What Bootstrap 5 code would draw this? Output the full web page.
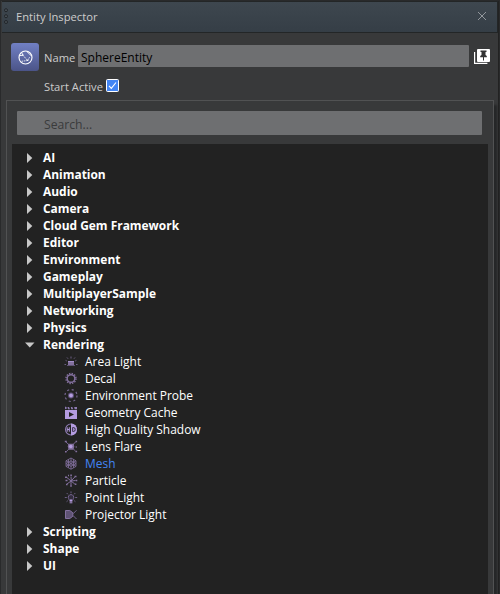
<!DOCTYPE html>
<html lang="en">
<head>
<meta charset="utf-8">
<meta name="viewport" content="width=device-width, initial-scale=1">
<title>Entity Inspector</title>
<link href="https://cdn.jsdelivr.net/npm/bootstrap@5.3.0/dist/css/bootstrap.min.css" rel="stylesheet">
<style>
  body { background: #38393a; color: #ccc; font: 11.2px/17px "Open Sans", sans-serif; height: 594px; }
  .inspector { height: 594px; border: 2px solid #292a2b; border-width: 1px 1px 0 1px; box-shadow: inset -1px 0 #222; }
  .title-bar { height: 32px; margin: 0 1px 0 1px; padding: 0 10px 2px 2px; background: linear-gradient(#3e474f, #353e46); border: 1px solid #232627; border-left: 0; color: #ccc; }
  .grip { width: 4px; margin-right: 8px; }
  .entity-head { height: 67px; padding: 10px 9px 0 10px; }
  .entity-icon { width: 28px; height: 28px; border-radius: 3px; background: linear-gradient(#7180c4, #4b5488); }
  .name-line { height: 22px; margin-top: 2px; }
  .name-label { width: 34px; margin-left: 5px; margin-top: 3px; }
  .name-input { height: 22px; background: #6e6f71; color: #000; border: 0; border-radius: 1px; padding: 2px 3px 0; font: 12px/20px "Open Sans", sans-serif; width: 391px; }
  .pin { margin-top: 5px; }
  .active-row { padding-left: 33px; margin-top: 7px; height: 16px; }
  .active-row svg { margin-left: 3px; margin-top: -2px; }
  .component-panel { margin: 0 5px; height: 494px; border: 1px solid #515253; border-bottom: 0; box-shadow: 3px 5px 2px #252627; padding: 10px 5px 0; }
  .search-input { height: 24px; margin: 0 6px 0 5px; width: 465px; background: #6e6f71; color: #3e3f40; border: 0; border-radius: 1px; padding: 2px 27px 0; font: 12.2px/22px "Open Sans", sans-serif; }
  .search-input::placeholder { color: #3a3b3c; opacity: 1; }
  .tree { margin-top: 9px; height: 450px; background: #222; padding-top: 5px; color: #fff; }
  .tree-row { height: 17px; line-height: 17px; font-size: 11.95px; white-space: nowrap; }
  .group-row { padding-left: 13px; font-weight: 700; }
  .group-row svg { width: 10px; height: 12px; margin-right: 8px; }
  .leaf-row { padding-left: 52px; }
  .leaf-row svg { width: 14px; height: 14px; margin-right: 7px; overflow: visible; }
  .leaf-row.selected { color: #4285f4; }
  svg { display: block; flex: none; }
</style>
<script src="https://cdn.jsdelivr.net/npm/bootstrap@5.3.0/dist/js/bootstrap.bundle.min.js"></script>
</head>
<body class="m-0 overflow-hidden">
<main class="inspector">
  <header class="title-bar d-flex align-items-center">
    <svg class="grip" width="4" height="16" viewBox="0 0 4 16" fill="#4b5359" stroke="#1f2326" stroke-width=".9"><circle cx="2" cy="2.2" r="1.5"/><circle cx="2" cy="8.2" r="1.5"/><circle cx="2" cy="14" r="1.5"/></svg>
    <span>Entity Inspector</span>
    <svg class="ms-auto" width="10" height="10" viewBox="0 0 10 10" fill="none" stroke="#92979c"><path d="M1 1l8 8M9 1L1 9"/></svg>
  </header>
  <section class="entity-head">
    <div class="d-flex">
      <div class="entity-icon d-flex align-items-center justify-content-center">
        <svg width="15" height="15" viewBox="0 0 15 15" fill="none" stroke="#fff"><circle cx="7.5" cy="7.5" r="6.5" stroke-width="1.1"/><path d="M1.3 5.6L5 5.3M5 5.3L3.7 2.7M8.8 1.5l4.4 4.2" stroke-width=".9"/><path d="M5 5.3l4.6 5.2M3.6 11.3l6-.8M11.6 7.2l-2 3.3" stroke-width=".8" stroke-dasharray="1.6 .7"/><path d="M4.5 5h1M9 10.3h1.4"/></svg>
      </div>
      <div class="d-flex align-items-center name-line">
        <label class="name-label" for="entityName">Name</label>
        <input class="name-input" id="entityName" value="SphereEntity">
      </div>
      <svg class="pin ms-auto" width="16" height="17" viewBox="0 0 16 17"><path d="M.6 4v11.4h12.8" fill="none" stroke="#fff" stroke-width="1.2"/><rect x="3" y="1" width="13" height="13" rx="1" fill="#fff"/><path d="M6.5 2.5h6v1.4h-1v3l1.3 1.2v1.2H10v3.2H9V9.3H6.2V8.1l1.3-1.2v-3h-1z" fill="#333"/></svg>
    </div>
    <div class="active-row d-flex align-items-center">
      <span>Start Active</span>
      <svg width="13" height="13" viewBox="0 0 13 13"><rect x=".5" y=".5" width="12" height="12" rx="1" fill="#4285f4" stroke="#fff"/><path d="M3 6.8l2.3 2.6L10 3.5" fill="none" stroke="#fff" stroke-width="1.1"/></svg>
    </div>
  </section>
  <section class="component-panel">
    <input class="search-input d-block" placeholder="Search..." aria-label="Search">
    <div class="tree" id="tree"></div>
  </section>
</main>
<script>
  const icons = {
    area: '<path d="M4 6h6v4H4z" fill="#84719f"/><path d="M4 6.5h6" stroke="#a48fcb"/><path d="M3 10.5h8" stroke="#5f5374"/><path d="M7 1.5v2M3 2.5l1 1.2M11 2.5l-1 1.2M.5 9.5h1.6M12 9.5h1.6M1.6 5.4l1.2.6M12.4 5.4l-1.2.6" stroke="#6c5f84"/>',
    decal: '<circle cx="7" cy="6.5" r="3.8" fill="none" stroke="#84719f" stroke-width="1.4"/><circle cx="7" cy="6.5" r="5" fill="none" stroke="#84719f" stroke-width="1.4" stroke-dasharray="1.4 1.218"/>',
    probe: '<circle cx="7" cy="6.5" r="6" fill="none" stroke="#75658f" stroke-width="1.2" stroke-dasharray="2.1 2.612"/><circle cx="7" cy="6.5" r="3" fill="#5f5278"/><circle cx="7" cy="6.5" r="1.9" fill="#b49ce0"/>',
    cache: '<path d="M1 4h12v9H1z" fill="#b49ce0"/><path d="M5 6l5 2.5L5 11z" fill="#222"/><path d="M1 3.2l2.2-.9L2 .8H1zM4 3.2h2L5 1H3.5zM7.3 3.2h2L8.3 1H6.8zM10.6 3.2H13V1h-2.8z" fill="#8e7bb2"/>',
    shadow: '<circle cx="7" cy="6.5" r="5.5" fill="none" stroke="#8e7bb2" stroke-width="1.1"/><path d="M7 .5a6 6 0 010 12z" fill="#b49ce0"/><path d="M3.2 4.3v4.4M5.3 4.3v4.4M3.2 6.5h2.1" stroke="#b49ce0"/><path d="M8.7 4.5v4h.8a1.7 2 0 000-4z" fill="none" stroke="#332b42"/>',
    flare: '<path d="M2 2l9.5 9M2.5 11.5L11.5 2" stroke="#75658f"/><path d="M4.3 3.7h5.4l.6 3-1 3H4.7L3.8 6.5z" fill="#84719f"/><circle cx="6.8" cy="6.5" r="1.7" fill="#b49ce0"/><path d="M.8 1.5h2M11.5 1.5h1.6M1 11.8h1.6M11.5 11.5h1.6M11.7 7h1" stroke="#84719f" stroke-width="1.5"/>',
    mesh: '<path d="M7 1l5 2.8v5.6l-5 2.8-5-2.8V3.8zM2 6.6L7 3.8l5 2.8-5 2.8zM2 3.8l10 5.6M12 3.8L2 9.4M7 1v11.2M4.5 2.4v8.4M9.5 2.4v8.4" fill="none" stroke="#7f6e9b" stroke-width=".85"/>',
    particle: '<path d="M7.3 7L7 2.5M7 7l4-4.2M7 7l4.6-.5M7 7l3.8 3M7 7v4.5M7 7L3 3.6M7 7l-4 3" stroke="#84719f"/><path d="M6.3 1.3h1.6M1 3.3h2M10.5 2.5h2M11.7 6.5h1.6M10.8 10.3h1.6M6.2 12h1.6M2 10.5h1.6M1.5 6.5h2M4 1.5h1" stroke="#84719f" stroke-width="1.5"/>',
    point: '<path d="M7 3.6a2.7 2.7 0 012.4 4L8.6 9.4H5.4L4.6 7.6A2.7 2.7 0 017 3.6z" fill="#332d3e" stroke="#75658f"/><path d="M5.6 9h2.8v3.4H5.6z" fill="#84719f"/><path d="M6 9.3h2" stroke="#b49ce0" stroke-width="1.5"/><path d="M7 .4v1.8M2.7 2l1.2 1.3M11.3 2l-1.2 1.3M.8 6.5h2M11.2 6.5h2M2.6 10.7l1.2-1M11.4 10.7l-1.2-1" stroke="#6c5f84"/>',
    projector: '<path d="M1.5 2.5h4.3l3 2.2v3.6l-3 2.2H1.5z" fill="#5f5374" stroke="#84719f"/><path d="M9 5.8l3.5-3.5M9 7.5l3.5 3.5" stroke="#75658f"/>'
  };
  const components = [['area','Area Light'],['decal','Decal'],['probe','Environment Probe'],['cache','Geometry Cache'],['shadow','High Quality Shadow'],['flare','Lens Flare'],['mesh','Mesh'],['particle','Particle'],['point','Point Light'],['projector','Projector Light']];
  const groups = ['AI','Animation','Audio','Camera','Cloud Gem Framework','Editor','Environment','Gameplay','MultiplayerSample','Networking','Physics','Rendering','Scripting','Shape','UI'];
  let html = '';
  for (const name of groups) {
    const open = name === 'Rendering';
    const arrow = open ? 'M0 3.5h9.5L4.75 8.5z' : 'M2 1v10L7.3 6z';
    html += `<div class="tree-row group-row d-flex align-items-center"><svg viewBox="0 0 10 12"><path d="${arrow}" fill="#c8c8c8"/></svg><span>${name}</span></div>`;
    if (open) for (const [icon, label] of components)
      html += `<div class="tree-row leaf-row d-flex align-items-center${label === 'Mesh' ? ' selected' : ''}"><svg viewBox="0 0 14 14">${icons[icon]}</svg><span>${label}</span></div>`;
  }
  document.getElementById('tree').innerHTML = html;
</script>
</body>
</html>
